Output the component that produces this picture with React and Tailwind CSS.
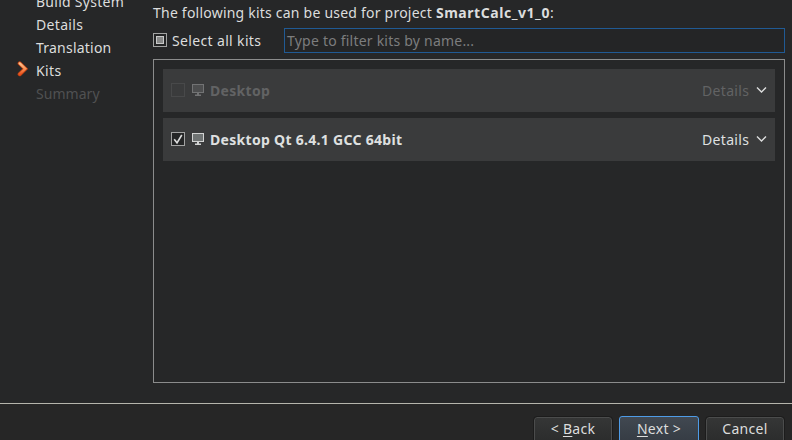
import React from "react";

function Check({ state, dim }) {
  return (
    <span
      className={`flex size-3.5 shrink-0 items-center justify-center border ${
        dim ? "border-[#48494a]" : "border-[#a2a3a3] bg-[#242526]"
      }`}
    >
      {state === "partial" && <span className="size-2 border border-[#c8c9c9] bg-[#868787]" />}
      {state === "on" && (
        <svg width="12" height="12" viewBox="0 0 12 12" fill="none" stroke="#dcdddd" strokeWidth="1.6">
          <path d="M2.2 6.2 5 9.8 9.8 2" />
        </svg>
      )}
    </span>
  );
}

function Monitor({ dim }) {
  const c = dim ? "#727374" : "#d2d3d3";
  return (
    <svg className="mb-px ml-[7px] shrink-0" width="12" height="12" viewBox="0 0 12 12">
      <rect x="0.5" y="0.5" width="11" height="8" fill={dim ? "#4d4e4f" : "#6f7373"} stroke={c} />
      <path d="M5 9h2v1.5h2V12H3v-1.5h2z" fill={c} />
    </svg>
  );
}

function KitRow({ name, checked, dim }) {
  return (
    <div className={`flex h-[43px] items-center bg-[#3a3b3c] pr-2 pl-2 ${dim ? "text-[#626364]" : "text-[#dfe0e0]"}`}>
      <span className="mb-px flex">
        <Check state={checked ? "on" : "off"} dim={dim} />
      </span>
      <Monitor dim={dim} />
      <span className="ml-1.5 font-bold tracking-[0.3px]">{name}</span>
      <span className="ml-auto w-[54px] tracking-[0.33px]">Details</span>
      <svg className="mb-px" width="11" height="8" viewBox="0 0 11 8" fill="none" stroke="#dcdddd" strokeWidth="1.4">
        <path d="M1 1.5 5.5 6 10 1.5" />
      </svg>
    </div>
  );
}

const steps = [
  ["Build System", "tracking-[0.27px]"],
  ["Details", "tracking-[0.33px]"],
  ["Translation", "tracking-[0.22px]"],
  ["Kits", "tracking-[0.35px]"],
  ["Summary", "tracking-[0.05px]"],
];

export default function App() {
  return (
    <div className="flex h-[440px] w-[792px] flex-col overflow-hidden bg-[#262728] font-['Noto_Sans','Open_Sans',sans-serif] text-[14px] leading-[23px] whitespace-nowrap text-[#dcdddd]">
      <div className="flex h-[403px] shrink-0">
        <nav className="-mt-2.5 w-[153px] shrink-0">
          {steps.map(([label, track]) => (
            <div key={label} className={`flex h-[23px] items-center ${label === "Summary" ? "text-[#505152]" : ""}`}>
              <span className="flex w-9 shrink-0 pb-[3px] pl-[17px]">
                {label === "Kits" && (
                  <svg width="11" height="16" viewBox="0 0 11 16" fill="none" strokeLinecap="round">
                    <defs>
                      <linearGradient id="arrow" x1="0" y1="0" x2="0" y2="1">
                        <stop offset="0" stopColor="#ffc08a" />
                        <stop offset="0.5" stopColor="#fa9558" />
                        <stop offset="1" stopColor="#e8501c" />
                      </linearGradient>
                    </defs>
                    <path d="M2.7 2.4 8.3 7.8 2.7 13.2" stroke="#c64414" strokeWidth="4" />
                    <path d="M2.7 2.4 8.3 7.8 2.7 13.2" stroke="url(#arrow)" strokeWidth="2.4" />
                  </svg>
                )}
              </span>
              <span className={track}>{label}</span>
            </div>
          ))}
        </nav>
        <main className="w-[632px]">
          <div className="h-7 pt-px tracking-[0.22px]">
            <span>The following kits can be used for project </span>
            <b className="tracking-[0.55px]">SmartCalc_v1_0</b>:
          </div>
          <div className="flex h-[25px] items-center">
            <span className="mb-px flex">
              <Check state="partial" />
            </span>
            <span className="ml-[5px] w-28 tracking-[0.35px]">Select all kits</span>
            <div className="flex h-[25px] flex-1 items-center border border-[#205a94] bg-[#242526] pl-0.5 tracking-[0.22px] text-[#7c7d7e]">
              <span>Type to filter kits by name...</span>
            </div>
          </div>
          <section className="mt-1.5 flex h-[324px] flex-col gap-1.5 border border-[#8b8c8c] p-[9px]">
            <KitRow name="Desktop" dim />
            <KitRow name="Desktop Qt 6.4.1 GCC 64bit" checked />
          </section>
        </main>
      </div>
      <footer className="flex h-[37px] shrink-0 justify-end gap-[7px] border-t border-[#b5b5ac] bg-[#262626] pt-3 pr-2 tracking-[0.3px]">
        <button className="mt-px flex h-[26px] w-[78px] items-center justify-center rounded-[3px] border border-[#4b4c4c] bg-linear-to-b from-[#353636] to-[#2b2c2c] pb-1 outline-1 outline-[#1c1c1c]">
          <span>&lt; <u className="underline-offset-2">B</u>ack</span>
        </button>
        <button className="flex h-7 w-20 items-center justify-center rounded-[3px] border border-[#4e9be6] bg-linear-to-b from-[#414851] to-[#353b43] pb-1">
          <span><u className="underline-offset-2">N</u>ext &gt;</span>
        </button>
        <button className="mt-px flex h-[26px] w-[78px] items-center justify-center rounded-[3px] border border-[#4b4c4c] bg-linear-to-b from-[#353636] to-[#2b2c2c] pb-1 outline-1 outline-[#1c1c1c]">
          <span>Cancel</span>
        </button>
      </footer>
    </div>
  );
}
